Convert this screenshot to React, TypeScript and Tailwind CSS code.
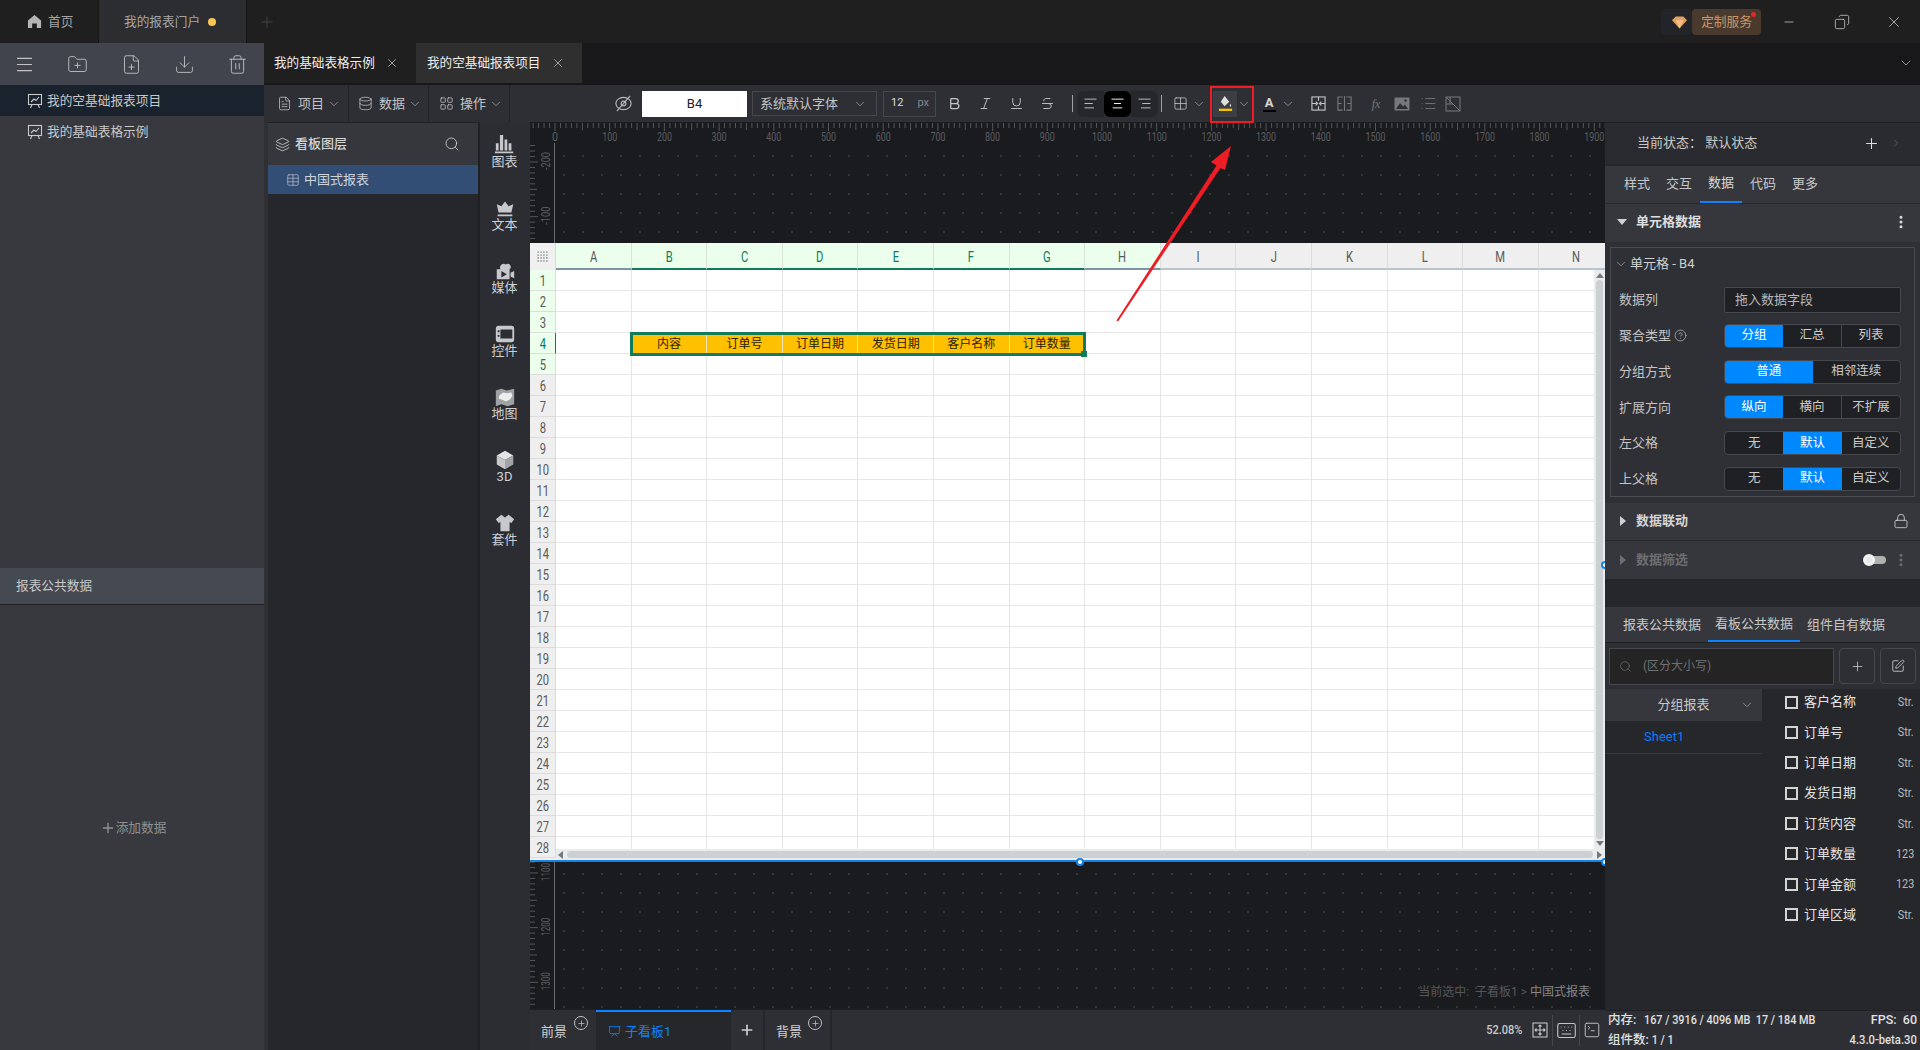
import {
  AlignCenter, AlignLeft, AlignRight, Bold, ChevronDown, ChevronRight, CircleHelp, Copy, Database, Download,
  EllipsisVertical, FilePlus, FileText, FolderPlus, Grid2x2, Italic, Keyboard, LayoutGrid, Layers, List, Lock,
  Menu, Minus, Plus, Presentation, Search, SquarePen, SquareTerminal, Strikethrough, Table, Trash2, Underline, X,
} from 'lucide-react'
import type { ReactNode } from 'react'

const COLS = 'ABCDEFGHIJKLMN'.split('')
const ROWS = Array.from({ length: 28 }, (_, i) => i + 1)
const SELECTED = ['内容', '订单号', '订单日期', '发货日期', '客户名称', '订单数量']
const FIELDS = [
  ['客户名称', 'Str.'],
  ['订单号', 'Str.'],
  ['订单日期', 'Str.'],
  ['发货日期', 'Str.'],
  ['订货内容', 'Str.'],
  ['订单数量', '123'],
  ['订单金额', '123'],
  ['订单区域', 'Str.'],
]

function Chev({ className = '' }: { className?: string }) {
  return <ChevronDown strokeWidth={1.25} className={`w-[14px] h-[14px] text-[#a8a8a8] shrink-0 ${className}`} />
}

function BoardIcon() {
  return (
    <svg viewBox="0 0 16 16" className="w-[16px] h-[16px] fill-none stroke-[#c8c8c8] stroke-[1.1]">
      <rect x="1.5" y="1.5" width="13" height="10" />
      <path d="M4 9 L7 6 L9 7.5 L12 4 M5 11.5 L3.5 15 M11 11.5 L12.5 15" />
    </svg>
  )
}

function TopBar() {
  return (
    <div className="h-[43px] shrink-0 bg-[#1f1f1f] flex items-center text-[12.7px]">
      <div className="w-[99px] h-full border-r border-[#141414] flex items-center pl-[27px] gap-[6px] text-[#a5a5a5]">
        <svg viewBox="0 0 16 16" className="w-[15px] h-[15px] fill-[#b5b5b5]">
          <path d="M8 1 L15 7 V15 H10.5 V10 H5.5 V15 H1 V7 Z" />
        </svg>
        首页
      </div>
      <div className="w-[148px] h-full bg-[#2c2d31] border-r border-[#141414] flex items-center pl-[25px] text-[#a5a5a5]">
        我的报表门户
        <span className="w-2 h-2 rounded-full bg-[#fdc453] ml-2" />
      </div>
      <Plus strokeWidth={1} className="w-[18px] h-[18px] text-[#4c4c4c] ml-[11px]" />
      <div className="flex-1" />
      <div className="w-[31px] h-[26px] bg-[#22242a] rounded-sm flex items-center pl-[11px]">
        <svg viewBox="0 0 16 14" className="w-[15px] h-[14px]">
          <path d="M4 1 H12 L16 5 L8 14 L0 5 Z" fill="#e2a15e" />
          <path d="M4 5 H12 L8 14 Z" fill="#f3c08a" />
        </svg>
      </div>
      <div className="relative w-[69px] h-[26px] bg-[#4a3a2e] rounded-sm flex items-center justify-center text-[#c89768]">
        定制服务
        <span className="absolute right-[5px] top-[3px] w-[5px] h-[5px] rounded-full bg-[#e0282e]" />
      </div>
      <Minus strokeWidth={1.5} className="w-[14px] h-[14px] text-[#b0b0b0] ml-[21px]" />
      <Copy strokeWidth={1.25} className="w-[16px] h-[16px] text-[#c0c0c0] ml-[38px] -scale-x-100" />
      <X strokeWidth={1} className="w-[18px] h-[18px] text-[#d0d0d0] ml-[35px] mr-[17px]" />
    </div>
  )
}

function Sidebar() {
  const iconClass = 'w-[21px] h-[21px]'
  return (
    <div className="w-[264px] shrink-0 bg-[#38393e] flex flex-col text-[12.7px] text-[#c8c8c8]">
      <div className="h-[42px] bg-[#41444d] flex items-center justify-between pl-[14px] pr-4 text-[#c4c4c4]">
        <Menu strokeWidth={1.25} className={iconClass} />
        <FolderPlus strokeWidth={1} className={iconClass} />
        <FilePlus strokeWidth={1} className={iconClass} />
        <Download strokeWidth={1} className={iconClass} />
        <Trash2 strokeWidth={1} className={iconClass} />
      </div>
      <div className="h-[31px] bg-[#19222d] flex items-center pl-[27px] gap-[4px]">
        <BoardIcon />
        我的空基础报表项目
      </div>
      <div className="h-[31px] flex items-center pl-[27px] gap-[4px]">
        <BoardIcon />
        我的基础表格示例
      </div>
      <div className="h-[421px]" />
      <div className="h-[37px] bg-[#454952] border-b border-[#1f2026] flex items-center pl-4">报表公共数据</div>
      <div className="flex-1 flex items-center justify-center text-[#909090] pl-[2px]">
        <Plus strokeWidth={2} className="w-[16px] h-[16px]" />
        添加数据
      </div>
    </div>
  )
}

function DocTabs() {
  return (
    <div className="h-[42px] shrink-0 bg-[#18181a] flex text-[12.6px] text-[#eeeeee] pb-[2px]">
      <div className="w-[152px] bg-[#1f1f1f] flex items-center pl-[10px]">
        我的基础表格示例
        <X strokeWidth={1.25} className="w-[14px] h-[14px] ml-[10px] text-[#c8c8c8]" />
      </div>
      <div className="w-[166px] bg-[#2f2f2f] flex items-center pl-[11px]">
        我的空基础报表项目
        <X strokeWidth={1.25} className="w-[14px] h-[14px] ml-[11px] text-[#c8c8c8]" />
      </div>
      <div className="flex-1 flex items-center justify-end pr-[6px]">
        <Chev className="w-[16px] h-[16px]" />
      </div>
    </div>
  )
}

function MenuBtn({ icon, label, w }: { icon: ReactNode; label: string; w: string }) {
  return (
    <div className={`${w} h-full border-r border-[#222327] flex items-center gap-[6px] text-[#c4c4c4]`}>
      {icon}
      {label}
      <Chev className="-ml-[3px]" />
    </div>
  )
}

function ToolIcon({ children, className = '' }: { children: ReactNode; className?: string }) {
  return <div className={`h-[26px] flex items-center justify-center ${className}`}>{children}</div>
}

function Toolbar() {
  const ic = 'w-[15px] h-[15px]'
  return (
    <div className="h-[37px] shrink-0 bg-[#2e2f34] flex items-center text-[13px] text-[#c4c4c4]">
      <MenuBtn w="w-[85px] pl-[13px]" label="项目" icon={<FileText strokeWidth={1.25} className={ic} />} />
      <MenuBtn w="w-[80px] pl-[9px]" label="数据" icon={<Database strokeWidth={1.25} className={ic} />} />
      <MenuBtn w="w-[81px] pl-[10px]" label="操作" icon={<LayoutGrid strokeWidth={1.25} className={ic} />} />
      <ToolIcon className="w-5 ml-[103px]">
        <svg viewBox="0 0 20 20" className="w-[19px] h-[19px] fill-none stroke-[#b8b8b8] stroke-[1.2]">
          <ellipse cx="10" cy="10" rx="8" ry="6.5" />
          <circle cx="10" cy="10" r="2.5" />
          <path d="M17 2 L3 18" />
        </svg>
      </ToolIcon>
      <div className="w-[105px] h-[26px] ml-[9px] bg-white flex items-center justify-center text-[#222] text-[13px]">B4</div>
      <div className="w-[125px] h-[25px] ml-[5px] border border-[#47484d] flex items-center justify-between pl-[7px] pr-[9px]">
        系统默认字体
        <Chev />
      </div>
      <div className="w-[53px] h-[26px] ml-[6px] border border-[#47484d] flex items-center justify-between pl-[7px] pr-[6px] text-[11px]">
        <span className="text-[#dddddd]">12</span>
        <span className="text-[#85868a]">px</span>
      </div>
      <ToolIcon className="w-[31px] ml-[3px]"><Bold strokeWidth={2} className={ic} /></ToolIcon>
      <ToolIcon className="w-[31px]"><Italic strokeWidth={1.5} className={ic} /></ToolIcon>
      <ToolIcon className="w-[31px]"><Underline strokeWidth={1.5} className={ic} /></ToolIcon>
      <ToolIcon className="w-[31px]"><Strikethrough strokeWidth={1.5} className={ic} /></ToolIcon>
      <div className="w-px h-[17px] bg-[#a0a0a0] ml-[9px]" />
      <ToolIcon className="w-[27px] ml-[4px] bg-[#26272a] rounded-l-md"><AlignLeft strokeWidth={1.5} className={ic} /></ToolIcon>
      <ToolIcon className="w-[27px] bg-black rounded-md text-white"><AlignCenter strokeWidth={1.5} className={ic} /></ToolIcon>
      <ToolIcon className="w-[27px] bg-[#26272a] rounded-r-md"><AlignRight strokeWidth={1.5} className={ic} /></ToolIcon>
      <div className="w-px h-[17px] bg-[#a0a0a0] ml-[3px]" />
      <ToolIcon className="w-5 ml-[8px]"><Grid2x2 strokeWidth={1.25} className={ic} /></ToolIcon>
      <Chev className="ml-[2px]" />
      <ToolIcon className="w-[24px] ml-[7px] bg-[#3d3e43]">
        <svg viewBox="0 0 16 18" className="w-[15px] h-[17px]">
          <path d="M7 1 L12 7 L7 12 L3 7 Z" fill="#e0e0e0" />
          <path d="M13 9 C14 11 14.5 12 13.5 12.5 C12.5 12.5 12.2 11 13 9 Z" fill="#e0e0e0" />
          <rect x="1" y="14.5" width="14" height="2.5" fill="#f5c400" />
        </svg>
      </ToolIcon>
      <Chev />
      <ToolIcon className="w-5 ml-[8px]">
        <div className="flex flex-col items-center leading-none">
          <span className="text-[13px] font-bold text-[#d8d8d8] leading-[13px]">A</span>
          <span className="w-[13px] h-[2px] bg-black mt-[1px]" />
        </div>
      </ToolIcon>
      <Chev className="ml-[2px]" />
      <ToolIcon className="w-[18px] ml-[14px]">
        <svg viewBox="0 0 16 16" className="w-[15px] h-[15px] fill-none stroke-[#c4c4c4] stroke-[1.2]">
          <rect x="1" y="1" width="14" height="14" />
          <path d="M1 8 H6 M10 8 H15 M8 1 V5 M8 11 V15 M5 6 L7 8 L5 10 M11 6 L9 8 L11 10" />
        </svg>
      </ToolIcon>
      <ToolIcon className="w-[18px] ml-[8px]">
        <svg viewBox="0 0 16 16" className="w-[15px] h-[15px] fill-none stroke-[#77787c] stroke-[1.2]">
          <path d="M6 1 H1 V15 H6 M10 1 H15 V15 H10 M8 0 V16 M1 8 H5 M11 8 H15" />
        </svg>
      </ToolIcon>
      <ToolIcon className="w-[18px] ml-[14px] italic text-[#77787c] text-[12px] font-['Liberation_Serif',serif]">fx</ToolIcon>
      <ToolIcon className="w-[18px] ml-[8px]">
        <svg viewBox="0 0 16 16" className="w-[16px] h-[16px]">
          <rect x="0.5" y="1.5" width="15" height="13" rx="1" fill="#77787c" />
          <path d="M2 13 L6 7 L9 10.5 L11 8.5 L14 13 Z" fill="#2e2f34" />
          <circle cx="11.5" cy="4.5" r="1.2" fill="#2e2f34" />
        </svg>
      </ToolIcon>
      <ToolIcon className="w-[18px] ml-[8px]"><List strokeWidth={1.25} className="w-[17px] h-[17px] text-[#77787c]" /></ToolIcon>
      <ToolIcon className="w-[18px] ml-[7px]">
        <svg viewBox="0 0 16 16" className="w-[16px] h-[16px] fill-none stroke-[#77787c] stroke-[1]">
          <rect x="1" y="1" width="14" height="14" />
          <path d="M1 1 L15 15 M5 1 V8 M1 8 H8" />
        </svg>
      </ToolIcon>
    </div>
  )
}

function LayerPanel() {
  return (
    <div className="w-[210px] shrink-0 bg-[#26272a] flex flex-col text-[13px] mt-px">
      <div className="h-[42px] bg-[#36373c] flex items-center pl-[7px] text-[#d4d4d4] font-medium">
        <Layers strokeWidth={1.25} className="w-[15px] h-[15px] mr-[5px]" />
        看板图层
        <Search strokeWidth={1.25} className="w-[16px] h-[16px] ml-auto mr-[18px]" />
      </div>
      <div className="h-[29px] bg-[#334e75] flex items-center pl-[18px] text-[#cfd4da]">
        <Table strokeWidth={1} className="w-[14px] h-[14px] mr-[4px]" />
        中国式报表
      </div>
    </div>
  )
}

const RAIL: { label: string; icon: ReactNode }[] = [
  {
    label: '图表',
    icon: (
      <path d="M2 18 V10 H5 V18 Z M6.5 18 V1 H10 V18 Z M11.5 18 V6 H14.5 V18 Z M16 18 V10 H19 V18 Z M1 19 H21 V21 H1 Z" />
    ),
  },
  {
    label: '文本',
    icon: <path d="M12 5 L16 10 L21 8 L19 17 H5 L3 8 L8 10 Z M4 19 H20 V21 H4 Z" />,
  },
  {
    label: '媒体',
    icon: (
      <path
        fillRule="evenodd"
        d="M3 10 H7 A4 4 0 0 1 13 5 A3 3 0 0 1 17 10 V21 H3 Z M18 14 L22 12 V20 L18 18 Z M8 12 V19 L14 15.5 Z"
      />
    ),
  },
  {
    label: '控件',
    icon: (
      <path
        fillRule="evenodd"
        d="M5 3 H19 Q22 3 22 6 V18 Q22 21 19 21 H5 Q2 21 2 18 V6 Q2 3 5 3 Z M7 7 V17 H20 V7 Z M4 8 H6 V10 H4 Z M4 13 H6 V15 H4 Z"
      />
    ),
  },
  {
    label: '地图',
    icon: (
      <>
        <path d="M2 5 L8 3 L14 5 L22 3 V20 L15 22 L8 20 L2 22 Z" fill="#9fa1a5" />
        <path d="M6 10 L10 7 L14 8 L19 7 L20 11 L17 15 L13 17 L9 15 L5 14 Z" fill="#eceded" />
      </>
    ),
  },
  {
    label: '3D',
    icon: (
      <>
        <path d="M12 2 L21 7 L12 12 L3 7 Z" fill="#e4e5e7" />
        <path d="M3 7 L12 12 V22 L3 17 Z" fill="#c6c8cb" />
        <path d="M21 7 L12 12 V22 L21 17 Z" fill="#a3a5a9" />
      </>
    ),
  },
  {
    label: '套件',
    icon: <path d="M8 3 L12 6 L16 3 L22 8 L19 12 L17 11 V21 H7 V11 L5 12 L2 8 Z" />,
  },
]

function IconRail() {
  return (
    <div className="w-[50px] shrink-0 ml-[2px] bg-[#2c2d32] flex flex-col">
      {RAIL.map((item) => (
        <div key={item.label} className="h-[63px] shrink-0 pb-[4px] flex flex-col items-center justify-center text-[13px] leading-[16px] text-[#cdd0d4] pr-[1px]">
          <svg viewBox="0 0 24 24" className="w-[22px] h-[22px] mb-[2px] fill-[#c6c8cb]">{item.icon}</svg>
          <span className="-mt-[4px]">{item.label}</span>
        </div>
      ))}
    </div>
  )
}

function TopRuler() {
  const ticks = Array.from({ length: 205 }, (_, i) => i * 10 - 100)
  const x = (v: number) => 25 + v * 0.547
  return (
    <div className="h-[21px] shrink-0 bg-[#1a1b1e]">
      <svg width="1075" height="21" className="block">
        {ticks.map((v) => (
          <line key={v} x1={x(v)} x2={x(v)} y1={1} y2={v % 100 === 0 ? 9 : v % 50 === 0 ? 8 : 6} stroke="#55565a" strokeWidth="1" />
        ))}
        {Array.from({ length: 20 }, (_, i) => i * 100).map((v) => (
          <text key={v} x={x(v)} y={19} textAnchor="middle" fontSize="12" fill="#5c5d61" fontFamily="Roboto" textLength={v === 0 ? 6 : v < 1000 ? 15 : 20} lengthAdjust="spacingAndGlyphs">
            {v}
          </text>
        ))}
      </svg>
    </div>
  )
}

// origin = ruler value at the top edge of this piece
function SideRuler({ origin, height }: { origin: number; height: number }) {
  const y = (v: number) => (v - origin) * 0.547
  const ticks: number[] = []
  for (let v = Math.ceil(origin / 10) * 10; y(v) <= height; v += 10) ticks.push(v)
  return (
    <div className="w-[25px] shrink-0 border-r border-[#6a6b6f] bg-[#1a1b1e]">
      <svg width="24" height={height} className="block">
        {ticks.map((v) => (
          <line key={v} x1={0} x2={v % 100 === 0 ? 8 : v % 50 === 0 ? 7 : 5} y1={y(v)} y2={y(v)} stroke="#55565a" strokeWidth="1" />
        ))}
        {ticks.filter((v) => v % 100 === 0).map((v) => (
          <text key={v} transform={`translate(20 ${y(v) - 1}) rotate(-90)`} textAnchor="middle" fontSize="12" fill="#5c5d61" fontFamily="Roboto" textLength={String(v).length * 4.5} lengthAdjust="spacingAndGlyphs">
            {v}
          </text>
        ))}
      </svg>
    </div>
  )
}

function Handle({ className }: { className: string }) {
  return <span className={`absolute w-[8px] h-[8px] rounded-full bg-white border-2 border-[#1583e6] ${className}`} />
}

function Narrow({ children }: { children: ReactNode }) {
  return <span className="inline-block scale-x-[0.8]">{children}</span>
}

function Sheet() {
  return (
    <div className="relative h-[619px] shrink-0 bg-white flex flex-col border-b-2 border-[#1583e6]">
      <div className="h-[27px] shrink-0 flex bg-[#efefef] overflow-hidden text-[14px]">
        <div className="w-[26px] shrink-0 bg-[#f0f0f0] flex items-center justify-center border-r border-[#d8d8d8]">
          <svg viewBox="0 0 10 10" className="w-[11px] h-[11px] fill-[#9a9a9a]">
            {[1, 3.7, 6.3, 9].flatMap((cx) => [1, 3.7, 6.3, 9].map((cy) => <circle key={`${cx}-${cy}`} cx={cx} cy={cy} r="0.8" />))}
          </svg>
        </div>
        {COLS.map((c, i) => (
          <div
            key={c}
            className={`w-[75.6px] shrink-0 flex items-center justify-center pt-1 border-r border-b-2 ${
              i >= 1 && i <= 6
                ? 'bg-[#ebffec] text-[#0f7b5c] border-r-[#d8e4d8] border-b-[#0f7b5c]'
                : i === 0 || i === 7
                  ? 'bg-[#ebffec] text-[#5a5a5a] border-r-[#d8e4d8] border-b-[#7d93a8]'
                  : 'text-[#5a5a5a] border-r-[#dcdcdc] border-b-[#b8c4d0]'
            }`}
          >
            <Narrow>{c}</Narrow>
          </div>
        ))}
      </div>
      <div className="flex-1 min-h-0 flex">
        <div className="w-[26px] shrink-0 bg-[#efefef] text-[14px]">
          {ROWS.map((r) => (
            <div
              key={r}
              className={`h-[21px] flex items-center justify-center pt-[2px] border-r border-b border-[#dcdcdc] ${
                r === 4 ? 'text-[#0f7b5c] border-r-[#0f7b5c] bg-[#ebffec]' : r <= 5 ? 'text-[#5a5a5a] bg-[#ebffec]' : 'text-[#5a5a5a]'
              }`}
            >
              <Narrow>{r}</Narrow>
            </div>
          ))}
        </div>
        <div className="flex-1 min-w-0 flex flex-col">
          <div className="flex-1 min-h-0 flex">
            <div className="flex-1 min-w-0 overflow-hidden">
              {ROWS.map((r) => (
                <div key={r} className="h-[21px] flex">
                  {COLS.map((c, i) => (
                    <div
                      key={c}
                      className={`w-[75.6px] shrink-0 flex items-center justify-center pt-px text-[12px] text-[#2a2200] border-b border-[#e6e6e6] ${
                        r === 4 && i >= 1 && i <= 6 ? 'bg-[#ffc000] border-r border-r-[#f4e6b4]' : 'border-r border-r-[#e6e6e6]'
                      }`}
                    >
                      {r === 4 && i >= 1 && i <= 6 ? SELECTED[i - 1] : ''}
                    </div>
                  ))}
                </div>
              ))}
            </div>
            <div className="relative w-[11px] shrink-0 bg-[#e8ecee]">
              <div className="absolute left-[2px] right-[2px] top-[10px] bottom-[10px] rounded-full bg-[#cbd0d2]" />
              <span className="absolute left-[2px] top-[3px] w-0 h-0 border-x-[4px] border-x-transparent border-b-[5px] border-b-[#777]" />
              <span className="absolute left-[2px] bottom-[3px] w-0 h-0 border-x-[4px] border-x-transparent border-t-[5px] border-t-[#777]" />
            </div>
          </div>
          <div className="relative h-[11px] shrink-0 bg-[#e8ecee]">
            <div className="absolute left-[11px] right-[12px] top-[2px] bottom-[2px] rounded-full bg-[#cbd0d2]" />
            <span className="absolute left-[2px] top-[1.5px] w-0 h-0 border-y-[4px] border-y-transparent border-r-[5px] border-r-[#777]" />
            <span className="absolute right-[3px] top-[1.5px] w-0 h-0 border-y-[4px] border-y-transparent border-l-[5px] border-l-[#777]" />
          </div>
        </div>
      </div>
      {/* 选区 */}
      <div className="absolute left-[100px] top-[89px] w-[456px] h-[24px] border-[3px] border-[#107c5a] pointer-events-none">
        <span className="absolute -right-[4px] -bottom-[4px] w-[6px] h-[6px] bg-[#107c5a]" />
      </div>
    </div>
  )
}

function Canvas() {
  const dotsTop = 'bg-[radial-gradient(circle_at_9px_13px,#34353a_1.3px,transparent_1.4px)] bg-[length:19px_19px]'
  const dotsBottom = 'bg-[radial-gradient(circle_at_9px_12px,#34353a_1.3px,transparent_1.4px)] bg-[length:19px_19px]'
  return (
    <div className="relative flex-1 min-h-0 flex flex-col bg-[#1a1b1e] overflow-hidden">
      <TopRuler />
      <div className="h-[100px] shrink-0 flex">
        <SideRuler origin={-234.7} height={100} />
        <div className={`flex-1 ${dotsTop}`} />
      </div>
      <Sheet />
      <div className="relative flex-1 min-h-0 flex">
        <SideRuler origin={1080} height={148} />
        <div className={`flex-1 ${dotsBottom}`} />
        <div className="absolute right-[15px] bottom-[8px] text-[12px] text-[#55565a]">
          当前选中:&nbsp;&nbsp;子看板1 &gt; <span className="text-[#85868a]">中国式报表</span>
        </div>
      </div>
      <Handle className="left-[546px] top-[736px]" />
      <Handle className="right-[-4px] top-[736px]" />
      <Handle className="right-[-4px] top-[439px]" />
    </div>
  )
}

function BottomBar() {
  const plusCircle = (
    <span className="absolute right-[8px] top-[6px] w-[14px] h-[14px] rounded-full border border-[#c0c0c0] flex items-center justify-center">
      <Plus strokeWidth={2} className="w-[9px] h-[9px] text-[#c0c0c0]" />
    </span>
  )
  return (
    <div className="h-[41px] shrink-0 bg-[#2e2f34] border-t border-[#1f2023] flex text-[13px] text-[#d0d0d0]">
      <div className="relative w-[66px] flex items-center pl-[11px] pt-[3px]">前景{plusCircle}</div>
      <div className="w-[135px] bg-[#26272a] border-t-2 border-[#0a84ff] flex items-center pl-[12px] gap-[4px] pt-px text-[#0a84ff]">
        <Presentation strokeWidth={1.5} className="w-[13px] h-[13px]" />
        子看板1
      </div>
      <div className="w-[34px] flex items-center justify-center border-r-2 border-[#26272a]">
        <Plus strokeWidth={2.5} className="w-[16px] h-[16px]" />
      </div>
      <div className="relative w-[67px] flex items-center pl-[11px] pt-[3px] border-r-2 border-[#26272a]">背景{plusCircle}</div>
      <div className="flex-1 flex items-center justify-end text-[12px] font-medium text-[#c8c8c8]">
        <span className="inline-block origin-right scale-x-[0.92]">52.08%</span>
        <svg viewBox="0 0 16 16" className="w-[16px] h-[16px] ml-[10px] fill-none stroke-[#c4c4c4] stroke-[1.1]">
          <rect x="1" y="1" width="14" height="14" />
          <path d="M8 3 V13 M3 8 H13 M6.5 4.5 L8 3 L9.5 4.5 M6.5 11.5 L8 13 L9.5 11.5 M4.5 6.5 L3 8 L4.5 9.5 M11.5 6.5 L13 8 L11.5 9.5" />
        </svg>
        <span className="w-px h-[31px] bg-[#45464a] ml-[4px]" />
        <Keyboard strokeWidth={1.25} className="w-[21px] h-[21px] ml-[3px] text-[#c4c4c4]" />
        <span className="w-px h-[31px] bg-[#45464a] ml-[2px]" />
        <SquareTerminal strokeWidth={1.25} className="w-[18px] h-[18px] ml-[3px] mr-[4px] text-[#c4c4c4]" />
      </div>
    </div>
  )
}

function Segments({ items, active }: { items: string[]; active: number }) {
  return (
    <div className="w-[177px] h-[24px] flex border border-[#47484d] rounded-[4px] overflow-hidden bg-[#1f2023] text-[12.5px] text-[#cccccc]">
      {items.map((it, i) => (
        <div
          key={it}
          className={`flex-1 flex items-center justify-center ${
            i === active ? 'bg-[#0088ff] text-white' : i > 0 && i - 1 !== active ? 'border-l border-[#47484d]' : ''
          }`}
        >
          {it}
        </div>
      ))}
    </div>
  )
}

function FormRow({ label, children }: { label: ReactNode; children: ReactNode }) {
  return (
    <div className="flex items-center pl-[8px] pr-[13px]">
      <div className="w-[105px] flex items-center text-[#c4c4c4]">{label}</div>
      {children}
    </div>
  )
}

function RightPanel() {
  return (
    <div className="w-[315px] shrink-0 bg-[#26272a] flex flex-col text-[13px] text-[#c8c8c8] mt-px">
      <div className="h-[41px] shrink-0 bg-[#2a2b30] flex items-center pl-[32px] pb-px">
        当前状态：&nbsp;默认状态
        <Plus strokeWidth={1.5} className="w-[17px] h-[17px] ml-auto text-[#e0e0e0]" />
        <ChevronRight strokeWidth={1} className="w-[12px] h-[12px] ml-[10px] mr-[18px] text-[#8a8a8a]" />
      </div>
      <div className="h-[38px] shrink-0 mt-[2px] bg-[#36373c] border-b border-[#26272a] flex pl-[11px]">
        {['样式', '交互', '数据', '代码', '更多'].map((t) => (
          <div key={t} className={`w-[42px] flex items-center justify-center pb-[2px] ${t === '数据' ? 'border-b-2 border-[#0a84ff] text-[#d8d8d8]' : ''}`}>
            {t}
          </div>
        ))}
      </div>
      <div className="h-[38px] shrink-0 bg-[#36373c] flex items-center pl-[12px] pb-[2px] font-semibold text-[#dddddd]">
        <span className="w-0 h-0 border-x-[5px] border-x-transparent border-t-[6px] border-t-[#d0d0d0] mr-[9px]" />
        单元格数据
        <EllipsisVertical strokeWidth={2.5} className="w-[16px] h-[16px] ml-auto mr-[11px]" />
      </div>
      <div className="bg-[#2f3035] h-[261px] shrink-0 px-[5px] pt-[5px]">
        <div className="h-[250px] border border-[#4a4b50] flex flex-col">
          <div className="h-[39px] shrink-0 flex items-center pl-[3px] pb-[7px] text-[#d0d0d0]">
            <Chev className="mr-[2px]" />
            单元格 - B4
          </div>
          <div className="flex flex-col gap-[11.75px]">
            <div className="mb-[-1px]">
              <FormRow label="数据列">
                <div className="w-[177px] h-[26px] bg-[#1f2023] border border-[#47484d] rounded-[2px] flex items-center pl-[10px] text-[#b8b8b8]">拖入数据字段</div>
              </FormRow>
            </div>
            <FormRow label={<>聚合类型<CircleHelp strokeWidth={1.25} className="w-[13px] h-[13px] ml-[3px]" /></>}>
              <Segments items={['分组', '汇总', '列表']} active={0} />
            </FormRow>
            <FormRow label="分组方式">
              <Segments items={['普通', '相邻连续']} active={0} />
            </FormRow>
            <FormRow label="扩展方向">
              <Segments items={['纵向', '横向', '不扩展']} active={0} />
            </FormRow>
            <FormRow label="左父格">
              <Segments items={['无', '默认', '自定义']} active={1} />
            </FormRow>
            <FormRow label="上父格">
              <Segments items={['无', '默认', '自定义']} active={1} />
            </FormRow>
          </div>
        </div>
      </div>
      <div className="h-[38px] shrink-0 bg-[#36373c] border-b border-[#26272a] flex items-center pl-[15px] pb-[2px] font-semibold text-[#d4d4d4]">
        <span className="w-0 h-0 border-y-[5px] border-y-transparent border-l-[6px] border-l-[#d0d0d0] mr-[10px]" />
        数据联动
        <Lock strokeWidth={1.25} className="w-[16px] h-[16px] ml-auto mr-[11px]" />
      </div>
      <div className="h-[38px] shrink-0 bg-[#36373c] flex items-center pl-[15px] font-semibold text-[#6d6e72]">
        <span className="w-0 h-0 border-y-[5px] border-y-transparent border-l-[6px] border-l-[#6d6e72] mr-[10px]" />
        数据筛选
        <span className="relative w-[22px] h-[8px] ml-auto rounded-full bg-[#b0b0b0]">
          <span className="absolute -left-[1px] -top-[2px] w-[12px] h-[12px] rounded-full bg-[#e8e8e8] border-[3px] border-[#f4f4f4]" />
        </span>
        <EllipsisVertical strokeWidth={2.5} className="w-[16px] h-[16px] ml-[7px] mr-[11px] text-[#6d6e72]" />
      </div>
      <div className="h-[28px] shrink-0" />
      <div className="h-[36px] shrink-0 bg-[#36373c] border-b border-[#1f2023] flex pl-[11px]">
        {['报表公共数据', '看板公共数据', '组件自有数据'].map((t) => (
          <div key={t} className={`w-[92px] flex items-center justify-center ${t === '看板公共数据' ? 'border-b-2 border-[#0a84ff]' : ''}`}>
            {t}
          </div>
        ))}
      </div>
      <div className="h-[46px] shrink-0 bg-[#2e2f34] flex items-center pl-[4px] gap-[5px]">
        <div className="w-[225px] h-[37px] bg-[#242424] border border-[#47484d] flex items-center pl-[9px] gap-[11px] text-[12px] text-[#6f7074]">
          <Search strokeWidth={1.25} className="w-[13px] h-[13px]" />
          (区分大小写)
        </div>
        <div className="w-[36px] h-[36px] border border-[#47484d] rounded-[4px] flex items-center justify-center">
          <Plus strokeWidth={1.25} className="w-[15px] h-[15px]" />
        </div>
        <div className="w-[36px] h-[36px] border border-[#47484d] rounded-[4px] flex items-center justify-center">
          <SquarePen strokeWidth={1.5} className="w-[14px] h-[14px]" />
        </div>
      </div>
      <div className="flex-1 min-h-0 flex">
        <div className="w-[157px] shrink-0">
          <div className="h-[32px] bg-[#36373c] flex items-center justify-center relative">
            分组报表
            <Chev className="absolute right-[8px]" />
          </div>
          <div className="h-[33px] border-b border-[#36373c] flex items-center pl-[39px] text-[#0a7cff]">Sheet1</div>
        </div>
        <div className="flex-1 flex flex-col gap-[4.4px] pl-[23px] pr-[6px] text-[#e4e4e4]">
          {FIELDS.map(([name, type]) => (
            <div key={name} className="h-[26px] flex items-center">
              <span className="w-[13px] h-[13px] border-2 border-[#d4d4d4] mr-[6px]" />
              {name}
              <span className="ml-auto text-[12px] text-[#b8b8b8] origin-right scale-x-[0.9]">{type}</span>
            </div>
          ))}
        </div>
      </div>
      <div className="h-[40px] shrink-0 bg-[#2e2f34] border-t border-[#1f2023] px-[3px] text-[12.5px] font-medium text-[#e0e0e0] flex flex-col justify-center">
        <div className="h-[20px] flex items-center">
          内存:
          <span className="ml-[8px] inline-block origin-left scale-x-[0.87] whitespace-pre">167 / 3916 / 4096 MB  17 / 184 MB</span>
          <span className="ml-auto">FPS:&nbsp;&nbsp;60</span>
        </div>
        <div className="h-[20px] flex items-center">
          组件数:
          <span className="inline-block origin-left scale-x-[0.87]">&nbsp;1 / 1</span>
          <span className="ml-auto inline-block origin-right scale-x-[0.9]">4.3.0-beta.30</span>
        </div>
      </div>
    </div>
  )
}

function Annotation() {
  return (
    <>
      <div className="absolute left-[1210px] top-[86px] w-[44px] h-[37px] border-2 border-[#f01c24] pointer-events-none" />
      <svg width="1920" height="1050" className="absolute inset-0 pointer-events-none">
        <polygon points="1231,146 1211,162 1216.5,165.5 1116.5,320.5 1118,321.5 1220.5,168 1225,170" fill="#ee1c25" />
      </svg>
    </>
  )
}

export default function App() {
  return (
    <div className="relative w-screen h-screen overflow-hidden bg-[#1f2023] flex flex-col font-['Roboto','Noto_Sans_CJK_SC',sans-serif]">
      <TopBar />
      <div className="flex-1 min-h-0 flex">
        <Sidebar />
        <div className="flex-1 min-w-0 flex flex-col">
          <DocTabs />
          <Toolbar />
          <div className="flex-1 min-h-0 flex">
            <div className="w-[4px] shrink-0 bg-[#2f3034]" />
            <LayerPanel />
            <IconRail />
            <div className="w-[1075px] shrink-0 flex flex-col">
              <Canvas />
              <BottomBar />
            </div>
            <RightPanel />
          </div>
        </div>
      </div>
      <Annotation />
    </div>
  )
}
